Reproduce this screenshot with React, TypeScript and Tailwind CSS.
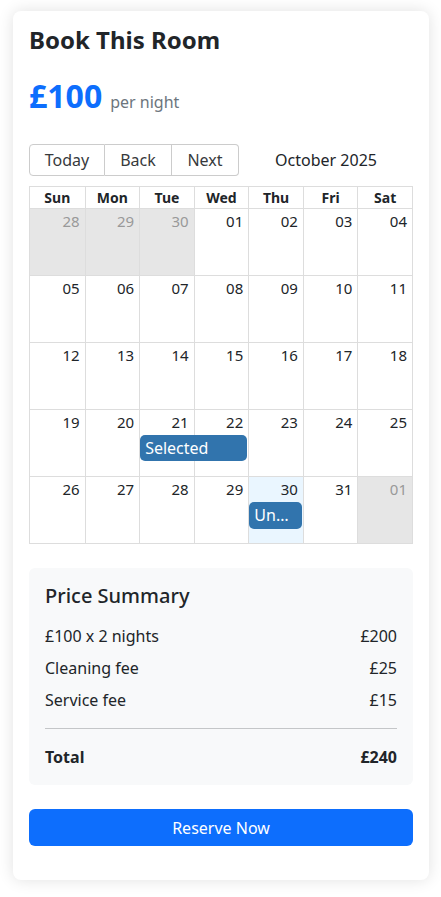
import React from "react";

type Day = { n: string; off?: boolean; today?: boolean };

const weeks: Day[][] = [
  [{ n: "28", off: true }, { n: "29", off: true }, { n: "30", off: true }, { n: "01" }, { n: "02" }, { n: "03" }, { n: "04" }],
  [{ n: "05" }, { n: "06" }, { n: "07" }, { n: "08" }, { n: "09" }, { n: "10" }, { n: "11" }],
  [{ n: "12" }, { n: "13" }, { n: "14" }, { n: "15" }, { n: "16" }, { n: "17" }, { n: "18" }],
  [{ n: "19" }, { n: "20" }, { n: "21" }, { n: "22" }, { n: "23" }, { n: "24" }, { n: "25" }],
  [{ n: "26" }, { n: "27" }, { n: "28" }, { n: "29" }, { n: "30", today: true }, { n: "31" }, { n: "01", off: true }],
];

const colStart = [
  "col-start-1",
  "col-start-2",
  "col-start-3",
  "col-start-4",
  "col-start-5",
  "col-start-6",
  "col-start-7",
];

const days = ["Sun", "Mon", "Tue", "Wed", "Thu", "Fri", "Sat"];

function Week({ week, idx }: { week: Day[]; idx: number }) {
  return (
    <div className="grid grid-cols-7 grid-rows-[25px_1fr] h-[67px] border-t border-[#dddddd]">
      {week.map((d, i) => (
        <div
          key={i}
          className={
            "row-start-1 row-span-2 text-right pr-[5px] pt-[1px] text-[15px] leading-[22px] " +
            colStart[i] +
            (i > 0 ? " border-l border-[#dddddd]" : "") +
            (d.off ? " bg-[#e6e6e6] text-[#999999]" : d.today ? " bg-[#eaf6ff] text-[#212529]" : " text-[#212529]")
          }
        >
          {d.n}
        </div>
      ))}
      {idx === 3 && (
        <div className="row-start-2 col-start-3 col-span-2 self-start z-10 mx-[1px] h-[26px] rounded-[5px] bg-[#3174ad] px-[5px] text-white text-[16px] leading-[26px] truncate">
          Selected
        </div>
      )}
      {idx === 4 && (
        <div className="row-start-2 col-start-5 self-start z-10 mx-[1px] h-[27px] rounded-[5px] bg-[#3174ad] px-[5px] text-white text-[16px] leading-[27px] truncate">
          Unavailable
        </div>
      )}
    </div>
  );
}

export default function App() {
  return (
    <div className="min-h-screen bg-white pt-[11px] px-[13px] pb-4" style={{ fontFamily: '"Noto Sans", sans-serif' }}>
      <div className="w-[416px] rounded-lg bg-white px-4 pt-[14px] pb-[34px] shadow-[0_0_16px_rgba(0,0,0,0.12)] text-[#212529]">
        <h3 className="text-[24px] font-bold leading-[29px]">Book This Room</h3>

        <div className="mt-[23px] flex items-baseline h-[38px]">
          <span className="text-[32px] font-bold leading-[38px] text-[#0d6efd]">£100</span>
          <span className="ml-[8px] text-[16px] text-[#6c757d]">per night</span>
        </div>

        <div className="mt-[29px] flex items-center h-[32px]">
          <div className="flex h-[32px] text-[16px] text-[#373a3c]">
            <button className="w-[76px] rounded-l-[4px] border border-[#cccccc]">Today</button>
            <button className="w-[67px] border-y border-r border-[#cccccc]">Back</button>
            <button className="w-[67px] rounded-r-[4px] border-y border-r border-[#cccccc]">Next</button>
          </div>
          <div className="flex-1 text-center text-[16px] text-[#212529]">October 2025</div>
        </div>

        <div className="mt-[10px] border border-[#dddddd]">
          <div className="grid grid-cols-7 h-[21px]">
            {days.map((d, i) => (
              <div
                key={d}
                className={"text-center text-[14px] font-bold leading-[21px]" + (i > 0 ? " border-l border-[#dddddd]" : "")}
              >
                {d}
              </div>
            ))}
          </div>
          {weeks.map((w, i) => (
            <Week key={i} week={w} idx={i} />
          ))}
        </div>

        <div className="mt-[24px] rounded-md bg-[#f8f9fa] p-4">
          <h5 className="text-[20px] font-medium leading-[24px]">Price Summary</h5>
          <div className="mt-4 flex flex-col gap-2 text-[16px] leading-[24px]">
            <div className="flex justify-between">
              <span>£100 x 2 nights</span>
              <span>£200</span>
            </div>
            <div className="flex justify-between">
              <span>Cleaning fee</span>
              <span>£25</span>
            </div>
            <div className="flex justify-between">
              <span>Service fee</span>
              <span>£15</span>
            </div>
          </div>
          <hr className="my-4 border-t border-[#c4c6c8]" />
          <div className="flex justify-between text-[16px] font-bold leading-[24px]">
            <span>Total</span>
            <span>£240</span>
          </div>
        </div>

        <button className="mt-[24px] h-[37px] w-full rounded-md bg-[#0d6efd] text-[16px] text-white">
          Reserve Now
        </button>
      </div>
    </div>
  );
}
